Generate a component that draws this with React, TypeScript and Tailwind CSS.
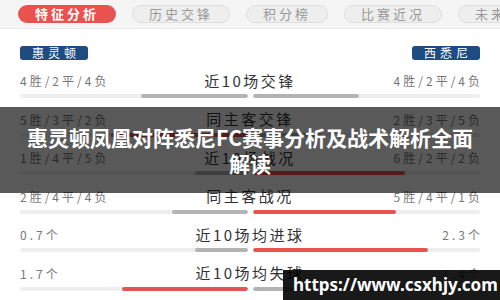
import React from "react";

const tabs = ["特征分析", "历史交锋", "积分榜", "比赛近况", "未来赛程"];

const rows = [
  { left: "4胜/2平/4负", label: "近10场交锋", right: "4胜/2平/4负", l: 47, r: 47, lRed: false, rRed: false },
  { left: "5胜/3平/2负", label: "同主客交锋", right: "2胜/3平/5负", l: 60, r: 30, lRed: true, rRed: false },
  { left: "1胜/4平/5负", label: "近10场战况", right: "6胜/2平/2负", l: 23, r: 67, lRed: false, rRed: true },
  { left: "2胜/4平/4负", label: "同主客战况", right: "5胜/4平/1负", l: 33, r: 63, lRed: false, rRed: true },
  { left: "0.7个", label: "近10场均进球", right: "2.3个", l: 23, r: 77, lRed: false, rRed: true },
  { left: "1.7个", label: "近10场均失球", right: "1.4个", l: 55, r: 45, lRed: true, rRed: false },
];

const font = { fontFamily: '"Noto Sans CJK SC", "Noto Sans", sans-serif' };

export default function App() {
  return (
    <div className="relative w-[500px] h-[300px] overflow-hidden bg-white" style={font}>
      {/* tabs */}
      <div className="h-[29px] bg-[#f5f5f5] flex items-center gap-[16px] pl-[18px] border-b border-[#ebebeb] whitespace-nowrap">
        {tabs.map((t, i) => (
          <div
            key={t}
            className={
              i === 0
                ? "h-[18px] px-[17px] shrink-0 rounded-full bg-[#e9524f] text-white text-[13px] font-bold tracking-[3px] flex items-center justify-center"
                : "h-[18px] px-[16px] shrink-0 rounded-full bg-[#eeeeee] border border-[#dddddd] text-[#999] text-[13px] tracking-[3px] flex items-center justify-center"
            }
          >
            {t}
          </div>
        ))}
      </div>

      <div className="px-5 pt-[17px]">
        <div className="flex justify-between">
          <span className="h-[14px] w-[68px] rounded-[3px] bg-[#1f4c80] text-white text-[12px] leading-[14px] tracking-[4px] pl-[4px] text-center">惠灵顿</span>
          <span className="h-[14px] w-[68px] rounded-[3px] bg-[#1f4c80] text-white text-[12px] leading-[14px] tracking-[4px] pl-[4px] text-center">西悉尼</span>
        </div>

        <div className="mt-[13px] flex flex-col">
          {rows.map((r) => (
            <div key={r.label} className="h-[38.5px]">
              <div className="relative flex justify-between h-[16px] items-center">
                <span className="text-[12px] text-[#777] tracking-[3px]">{r.left}</span>
                <span className="absolute left-0 right-0 text-center text-[15px] text-[#333] tracking-[2.5px]">{r.label}</span>
                <span className="text-[12px] text-[#777] tracking-[3px] -mr-[3px]">{r.right}</span>
              </div>
              <div className="mt-[5px] flex gap-[5px] h-[4px]">
                <div className="flex-1 bg-[#eeeeee] rounded-full flex justify-end overflow-hidden">
                  <div className={r.lRed ? "h-full rounded-full bg-[#e8534f]" : "h-full rounded-full bg-[#b3b3b3]"} style={{ width: `${r.l}%` }} />
                </div>
                <div className="flex-1 bg-[#eeeeee] rounded-full flex overflow-hidden">
                  <div className={r.rRed ? "h-full rounded-full bg-[#e8534f]" : "h-full rounded-full bg-[#b3b3b3]"} style={{ width: `${r.r}%` }} />
                </div>
              </div>
            </div>
          ))}
        </div>
      </div>

      {/* title overlay */}
      <div className="absolute left-0 right-0 top-[107px] h-[86px] bg-black/65 flex items-center justify-center">
        <h1 className="text-white text-[21px] font-bold leading-[26px] text-center whitespace-nowrap">
          惠灵顿凤凰对阵悉尼FC赛事分析及战术解析全面
          <br />
          解读
        </h1>
      </div>

      {/* watermark */}
      <div className="absolute right-0 bottom-0 w-[217px] h-[30px] bg-black/90 flex items-center pl-[10px]">
        <span className="text-white text-[17px] font-bold whitespace-nowrap" style={{ fontFamily: '"Noto Sans", "Liberation Sans", sans-serif' }}>
          https://www.csxhjy.com
        </span>
      </div>
    </div>
  );
}
